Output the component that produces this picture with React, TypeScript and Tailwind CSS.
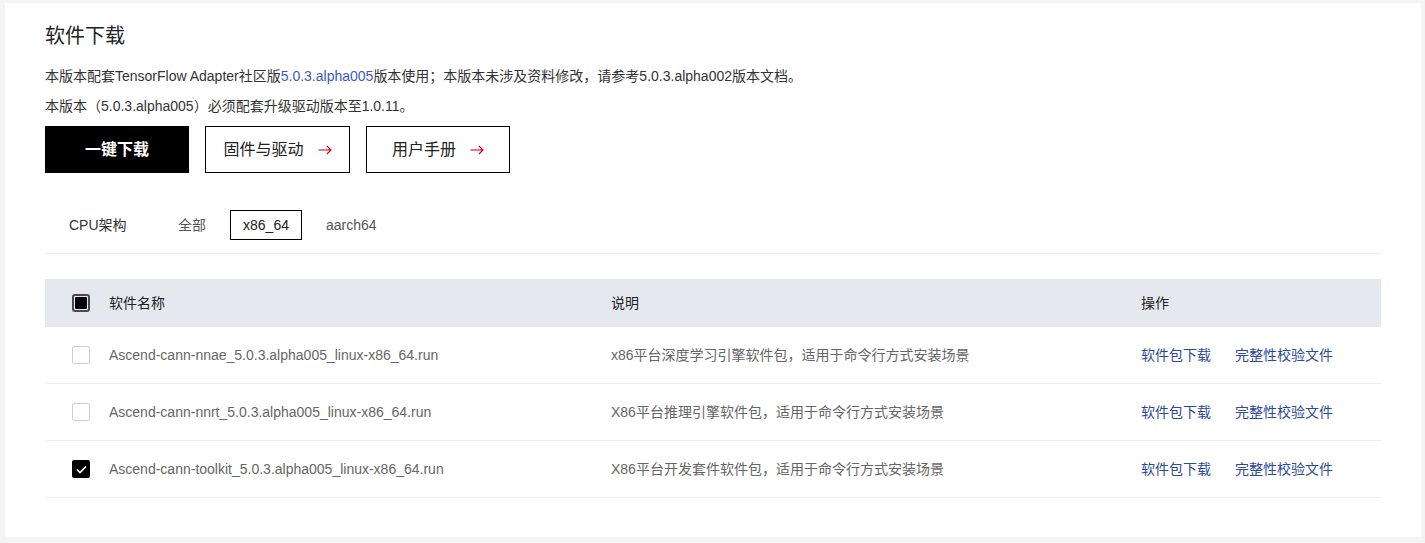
import React from "react";

const font = { fontFamily: '"Liberation Sans", "Noto Sans CJK SC", sans-serif' };

type Pkg = { name: string; desc: string; checked: boolean };

const packages: Pkg[] = [
  {
    name: "Ascend-cann-nnae_5.0.3.alpha005_linux-x86_64.run",
    desc: "x86平台深度学习引擎软件包，适用于命令行方式安装场景",
    checked: false,
  },
  {
    name: "Ascend-cann-nnrt_5.0.3.alpha005_linux-x86_64.run",
    desc: "X86平台推理引擎软件包，适用于命令行方式安装场景",
    checked: false,
  },
  {
    name: "Ascend-cann-toolkit_5.0.3.alpha005_linux-x86_64.run",
    desc: "X86平台开发套件软件包，适用于命令行方式安装场景",
    checked: true,
  },
];

const Arrow = () => (
  <svg width="14" height="10" viewBox="0 0 14 10" fill="none" className="ml-[14px]">
    <path d="M0.5 5H13M9 1l4 4-4 4" stroke="#c7000b" strokeWidth="1.1" />
  </svg>
);

const Checkbox = ({ checked }: { checked: boolean }) =>
  checked ? (
    <span className="w-[18px] h-[18px] rounded-[2px] bg-black flex items-center justify-center">
      <svg width="11" height="9" viewBox="0 0 11 9" fill="none">
        <path d="M1 4.5l3 3L10 1.5" stroke="#fff" strokeWidth="1.6" />
      </svg>
    </span>
  ) : (
    <span className="w-[18px] h-[18px] rounded-[2px] border border-[#cfcfcf] bg-white" />
  );

export default function App() {
  return (
    <div className="w-[1425px] h-[543px] bg-[#f4f4f4] pt-[3px] pl-[5px]" style={font}>
      <div className="w-[1416px] h-[534px] bg-white pl-[40px] pt-[19px]">
        <h2 className="text-[20px] leading-[28px] text-[#222]">软件下载</h2>
        <p className="mt-[11px] text-[14px] leading-[30px] text-[#333]">
          本版本配套TensorFlow Adapter社区版<span className="text-[#3a5cc0]">5.0.3.alpha005</span>
          版本使用；本版本未涉及资料修改，请参考5.0.3.alpha002版本文档。
        </p>
        <p className="text-[14px] leading-[30px] text-[#333]">
          本版本（5.0.3.alpha005）必须配套升级驱动版本至1.0.11。
        </p>

        <div className="mt-[5px] flex gap-4">
          <button className="w-[144px] h-[47px] bg-black text-white text-[16px] font-bold">
            一键下载
          </button>
          <button className="w-[145px] h-[47px] border border-black text-[16px] text-[#222] flex items-center justify-center">
            固件与驱动
            <Arrow />
          </button>
          <button className="w-[144px] h-[47px] border border-black text-[16px] text-[#222] flex items-center justify-center">
            用户手册
            <Arrow />
          </button>
        </div>

        <div className="mt-[37px] flex items-center text-[14px] text-[#333]">
          <span className="ml-[24px] w-[97px]">CPU架构</span>
          <div className="flex gap-[12px]">
            <span className="h-[30px] px-[12px] flex items-center text-[#555]">全部</span>
            <span className="h-[30px] w-[72px] border border-black flex items-center justify-center text-[#222]">
              x86_64
            </span>
            <span className="h-[30px] px-[12px] flex items-center text-[#555]">aarch64</span>
          </div>
        </div>

        <div className="mt-[13px] w-[1336px] border-t border-[#ececec]" />

        <div className="mt-[25px] w-[1336px] text-[14px]">
          <div className="grid grid-cols-[64px_502px_530px_1fr] h-[48px] items-center bg-[#e6e8f0] text-[#222]">
            <div className="pl-[27px]">
              <span className="w-[18px] h-[18px] rounded-[3px] border-2 border-[#4a4a4a] p-[1px] flex">
                <span className="flex-1 bg-black rounded-[1px]" />
              </span>
            </div>
            <div>软件名称</div>
            <div>说明</div>
            <div>操作</div>
          </div>
          {packages.map((p) => (
            <div
              key={p.name}
              className="grid grid-cols-[64px_502px_530px_1fr] h-[57px] items-center border-b border-[#eeeeee] text-[#666]"
            >
              <div className="pl-[27px] flex">
                <Checkbox checked={p.checked} />
              </div>
              <div>{p.name}</div>
              <div>{p.desc}</div>
              <div className="flex gap-[24px] text-[#2b4a9e]">
                <a>软件包下载</a>
                <a>完整性校验文件</a>
              </div>
            </div>
          ))}
        </div>
      </div>
    </div>
  );
}
